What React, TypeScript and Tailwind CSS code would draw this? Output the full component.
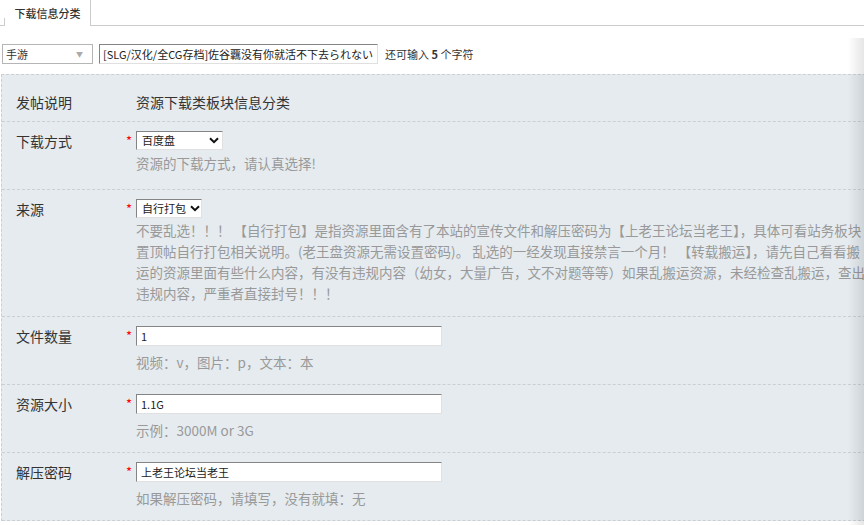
import React from 'react'

const font = { fontFamily: '"Noto Sans CJK SC", "Noto Sans", sans-serif' }

const Star = () => <span className="w-[10px] shrink-0 text-[13px] leading-[20px] text-[#f00]">*</span>

const Chevron = () => (
  <svg width="10" height="7" viewBox="0 0 10 7" className="shrink-0">
    <path d="M1 1.2 L5 5.2 L9 1.2" fill="none" stroke="#111" strokeWidth="2" />
  </svg>
)

const FakeSelect = ({ value, width }: { value: string; width: string }) => (
  <div
    className={`flex h-[19px] items-center justify-between gap-[4px] whitespace-nowrap border border-t-[#848484] border-l-[#848484] border-r-[#e0e0e0] border-b-[#e0e0e0] bg-white pl-[5px] pr-[3px] text-[11px] text-[#222] ${width}`}
  >
    <span className="leading-none">{value}</span>
    <Chevron />
  </div>
)

const TextBox = ({ value }: { value: string }) => (
  <div className="flex h-[20px] w-[306px] items-center border border-t-[#848484] border-l-[#848484] border-r-[#e0e0e0] border-b-[#e0e0e0] bg-white pl-[4px] text-[11px] text-[#222]">
    {value}
  </div>
)

const Row = ({
  label,
  className,
  children,
}: {
  label: string
  className: string
  children: React.ReactNode
}) => (
  <div className={`flex border-b border-dashed border-[#c8d0d6] pl-[14px] ${className}`}>
    <div className="w-[110px] shrink-0 text-[14px] leading-[20px] text-[#333]">{label}</div>
    <Star />
    <div className="flex flex-col">{children}</div>
  </div>
)

const Hint = ({ children, className = '' }: { children: React.ReactNode; className?: string }) => (
  <div className={`whitespace-nowrap text-[13.5px] leading-[21px] text-[#999] ${className}`}>{children}</div>
)

const sourceLines = [
  '不要乱选！！！ 【自行打包】是指资源里面含有了本站的宣传文件和解压密码为【上老王论坛当老王】，具体可看站务板块',
  '置顶帖自行打包相关说明。(老王盘资源无需设置密码)。 乱选的一经发现直接禁言一个月！ 【转载搬运】，请先自己看看搬',
  '运的资源里面有些什么内容，有没有违规内容（幼女，大量广告，文不对题等等）如果乱搬运资源，未经检查乱搬运，查出',
  '违规内容，严重者直接封号！！！',
]

export default function App() {
  return (
    <div className="relative h-[525px] w-[864px] overflow-hidden bg-white" style={font}>
      {/* tab bar */}
      <div className="flex h-[26px]">
        <div className="flex w-[5px] shrink-0 flex-col justify-end border-b border-[#ccc]">
          <div className="h-[7px] border-r border-[#ccc]" />
        </div>
        <div className="flex w-[86px] items-center justify-center border-r border-[#ccc] bg-white text-[11px] font-medium text-[#333]">
          下载信息分类
        </div>
        <div className="flex-1 border-b border-[#ccc]" />
      </div>

      {/* subject row */}
      <div className="mt-[18px] flex items-center pl-[2px] text-[11px] text-[#333]">
        <div className="flex h-[20px] w-[91px] items-center justify-between border border-[#b5b5b5] bg-white pl-[3px] pr-[9px]">
          <span>手游</span>
          <span className="text-[7px] text-[#aaa]">▼</span>
        </div>
        <div className="ml-[6px] flex h-[20px] w-[279px] items-center overflow-hidden border border-t-[#848484] border-l-[#848484] border-r-[#e0e0e0] border-b-[#e0e0e0] bg-white pl-[3px] text-[#222]">
          <span className="whitespace-nowrap">[SLG/汉化/全CG存档]佐谷覊没有你就活不下去られない</span>
        </div>
        <div className="ml-[7px] whitespace-nowrap">
          还可输入 <b className="font-bold">5</b> 个字符
        </div>
      </div>

      {/* panel */}
      <div className="ml-[1px] mt-[10px] w-[920px] border-l border-t border-dashed border-[#c8d0d6] bg-[#e5ebef]">
        <div className="flex border-b border-dashed border-[#c8d0d6] pb-[9px] pl-[14px] pt-[17px] text-[14px] leading-[20px] text-[#333]">
          <div className="w-[120px] shrink-0">发帖说明</div>
          <div>资源下载类板块信息分类</div>
        </div>

        <Row label="下载方式" className="pb-[15px] pt-[9px]">
          <FakeSelect value="百度盘" width="w-[87px]" />
          <Hint className="mt-[3px]">资源的下载方式，请认真选择!</Hint>
        </Row>

        <Row label="来源" className="pb-[12px] pt-[9px]">
          <FakeSelect value="自行打包" width="w-[66px]" />
          <div className="mt-[2px]">
            {sourceLines.map((line) => (
              <Hint key={line}>{line}</Hint>
            ))}
          </div>
        </Row>

        <Row label="文件数量" className="pb-[11px] pt-[9px]">
          <TextBox value="1" />
          <Hint className="mt-[6px]">视频：v，图片：p，文本：本</Hint>
        </Row>

        <Row label="资源大小" className="pb-[11px] pt-[9px]">
          <TextBox value="1.1G" />
          <Hint className="mt-[6px]">示例：3000M or 3G</Hint>
        </Row>

        <Row label="解压密码" className="pb-[11px] pt-[9px]">
          <TextBox value="上老王论坛当老王" />
          <Hint className="mt-[6px]">如果解压密码，请填写，没有就填：无</Hint>
        </Row>
      </div>

      {/* right edge shadow */}
      <div className="pointer-events-none absolute bottom-0 right-0 top-[38px] w-[16px] bg-linear-to-r from-transparent to-black/10" />
    </div>
  )
}
